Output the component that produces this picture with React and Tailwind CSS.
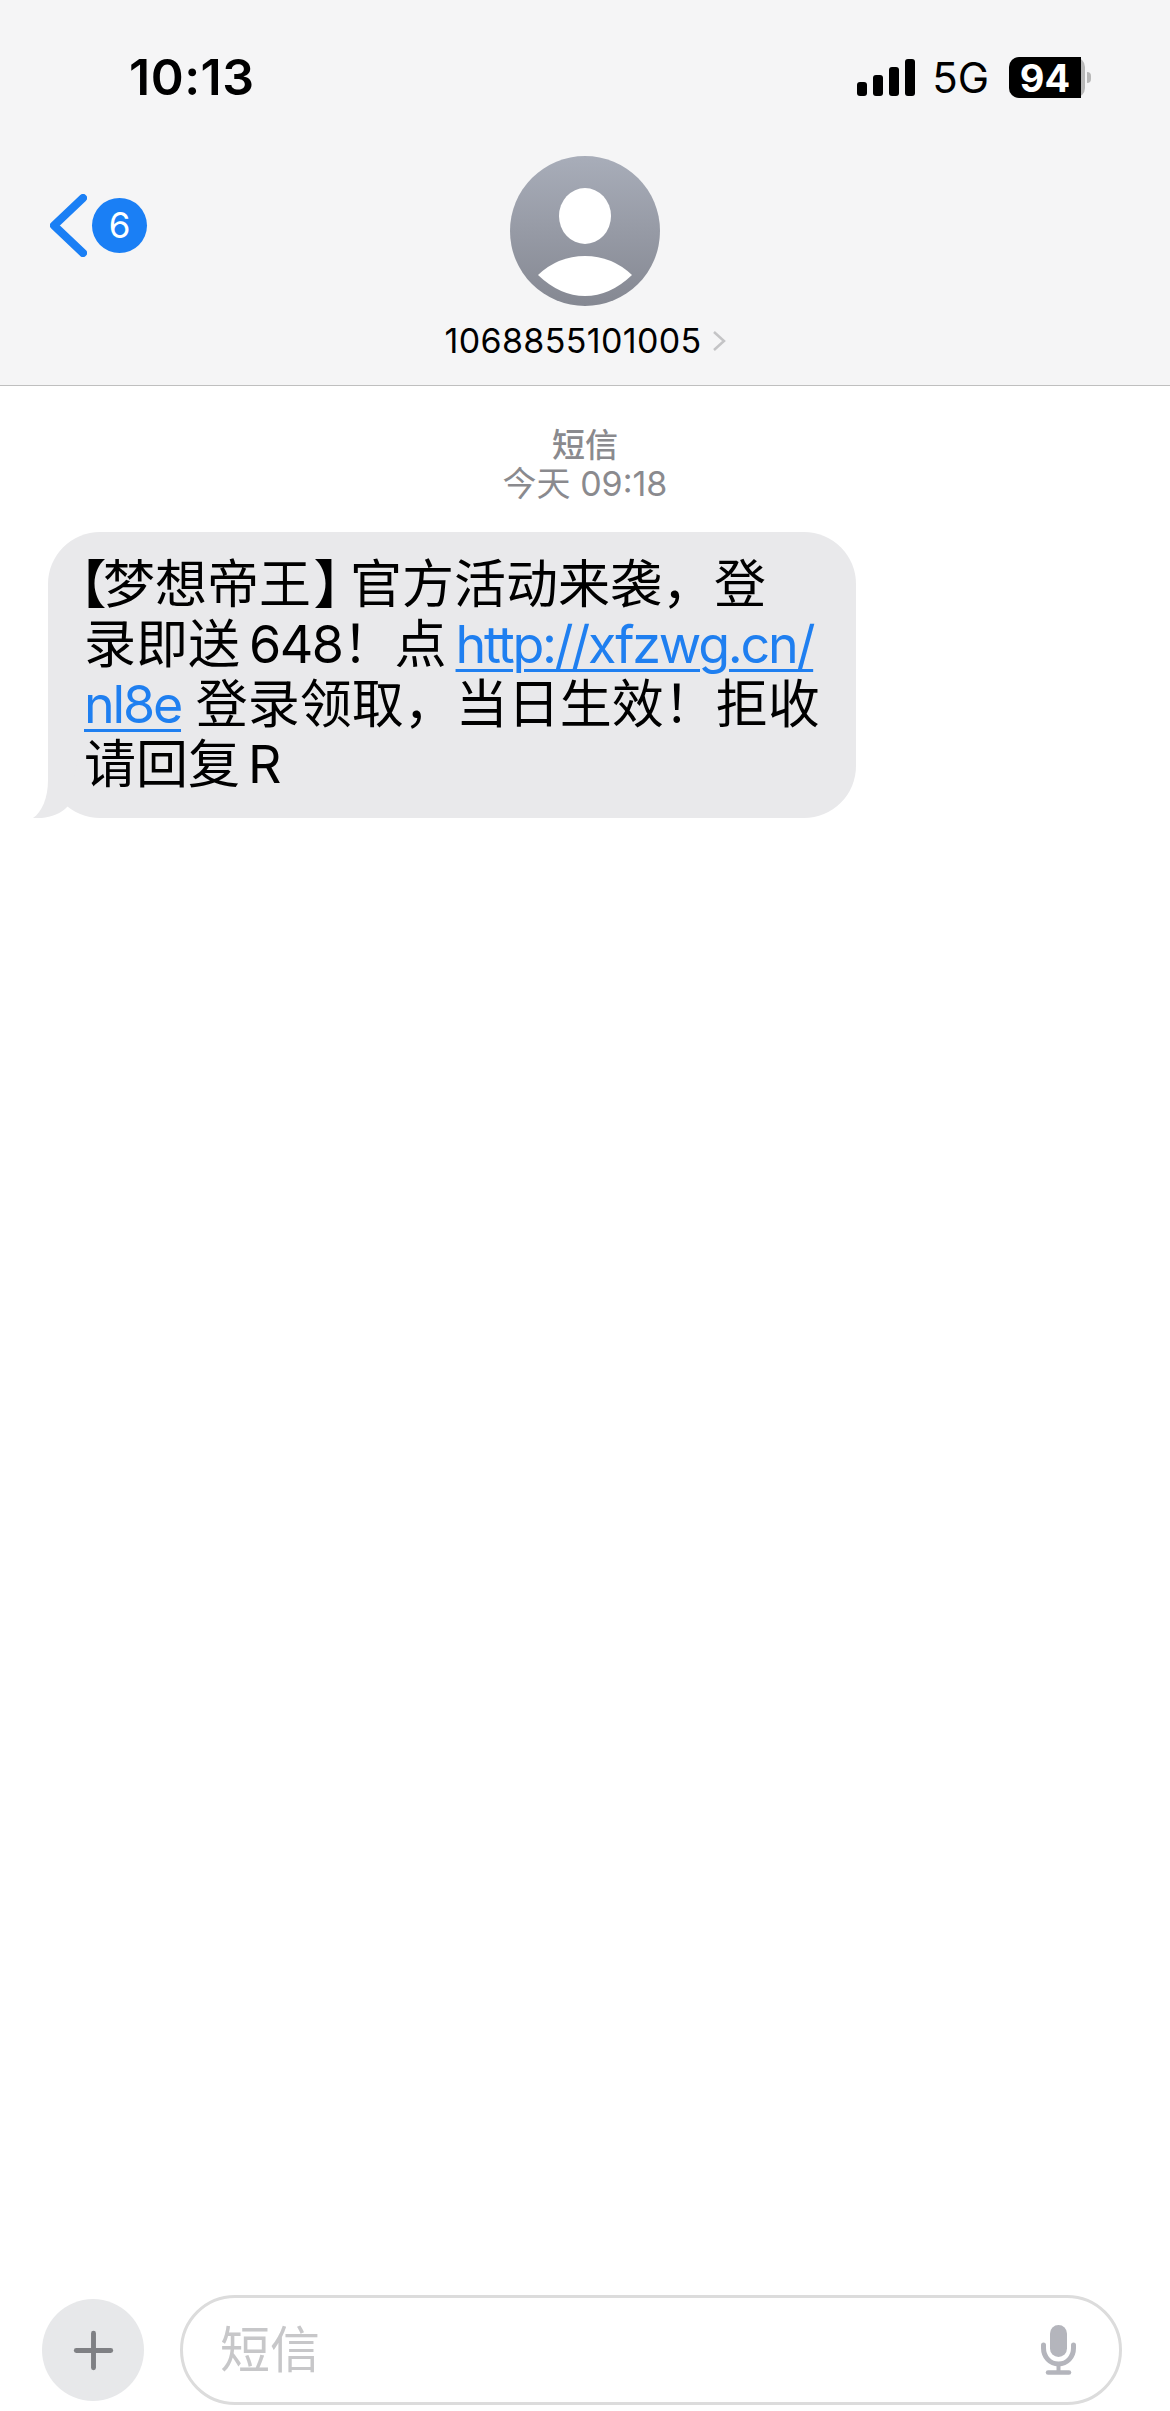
import React from 'react';
import { Plus } from 'lucide-react';

const cjk = { fontFamily: 'Inter, "Noto Sans CJK SC", sans-serif' };

function StatusBar() {
  return (
    <div className="flex h-[156px] justify-between pl-[129px] pr-[79px] pt-[57px] text-black">
      <div className="text-[50px] font-semibold leading-[41px] tracking-[0.5px]">10:13</div>
      <div className="flex h-[41px] items-center">
        <div className="flex h-[41px] items-end gap-[6px] pb-[2px]">
          <div className="h-[14px] w-[10px] rounded-[3px] bg-black" />
          <div className="h-[21px] w-[10px] rounded-[3px] bg-black" />
          <div className="h-[29px] w-[10px] rounded-[3px] bg-black" />
          <div className="h-[37px] w-[10px] rounded-[3px] bg-black" />
        </div>
        <div className="ml-[17px] text-[42px] leading-[41px]">5G</div>
        <div className="ml-[20px] flex h-[41px] items-center">
          <div className="flex h-[41px] w-[76px] rounded-[10px] bg-[#b8b8b8]">
            <div className="flex w-[72px] items-center justify-center rounded-l-[10px] bg-black text-[38px] font-bold leading-none text-white">94</div>
          </div>
          <div className="ml-[2px] h-[11px] w-[4px] rounded-r-full bg-[#b8b8b8]" />
        </div>
      </div>
    </div>
  );
}

function Header() {
  return (
    <header className="h-[386px] border-b border-[#bfbfbf] bg-[#f5f5f6]">
      <StatusBar />
      <div className="grid grid-cols-[1fr_auto_1fr]">
        <div className="flex items-center self-start pl-[50px] pt-[38px]">
          <svg width="37" height="63" viewBox="0 0 37 63" fill="none">
            <path d="M33 4 L4 31.5 L33 59" stroke="#1a7ff5" strokeWidth="8" strokeLinecap="round" strokeLinejoin="round" />
          </svg>
          <div className="ml-[5px] flex h-[55px] w-[55px] items-center justify-center rounded-full bg-[#1a7ff5] text-[35px] leading-none text-white">6</div>
        </div>
        <div className="flex flex-col items-center">
          <div className="flex h-[150px] w-[150px] items-center justify-center rounded-full bg-linear-to-b from-[#a8adb9] to-[#858892]">
            <svg width="150" height="150" viewBox="0 0 150 150">
              <ellipse cx="75" cy="60" rx="26" ry="28" fill="#fff" />
              <path d="M28 119 Q48 100 75 100 Q102 100 122 119 Q100 140 75 140 Q50 140 28 119 Z" fill="#fff" />
            </svg>
          </div>
          <div className="mt-[15px] flex items-center">
            <span className="text-[34px] leading-[40px] tracking-[0.35px] text-black">1068855101005</span>
            <svg className="ml-[10px]" width="14" height="22" viewBox="0 0 14 22" fill="none">
              <path d="M2 2 L12 11 L2 20" stroke="#c4c4c6" strokeWidth="2.5" />
            </svg>
          </div>
        </div>
        <div />
      </div>
    </header>
  );
}

function Bubble() {
  const link = 'tracking-[-2.2px] text-[#1f7ff0] underline decoration-[3px] underline-offset-[6px]';
  return (
    <div className="relative ml-[48px] mt-[29px] h-[286px] w-[808px] rounded-[52px] bg-[#e9e9eb] pl-[36px] pt-[23px] text-[52px] leading-[60px] text-black">
      <svg className="absolute bottom-0 left-[-15px]" width="55" height="60" viewBox="0 0 55 60">
        <path d="M15 0 L15 22 C15 40 9 54 0 60 C12 61 26 58 35 48 L45 0 Z" fill="#e9e9eb" />
      </svg>
      <div className="relative whitespace-nowrap">
        <span className="ml-[-5px] mr-[-2px] [font-feature-settings:'palt'] font-bold">【</span>梦想帝王<span className="ml-[4px] mr-[9px] [font-feature-settings:'palt'] font-bold">】</span>官方活动来袭，登<br />
        录即送<span className="ml-[9px] tracking-[-1.5px]">648</span>！点<a className={`ml-[9px] ${link}`}>http://xfzwg.cn/</a><br />
        <a className={link}>nl8e</a> 登录领取，当日生效！拒收<br />
        请回复<span className="ml-[8px]">R</span>
      </div>
    </div>
  );
}

function InputBar() {
  return (
    <div className="mt-auto flex items-center pb-[6px] pl-[42px] pr-[48px]">
      <div className="flex h-[102px] w-[102px] shrink-0 items-center justify-center rounded-full bg-[#e7e8ea]">
        <Plus size={59} color="#7f8084" strokeWidth={2} />
      </div>
      <div className="ml-[36px] flex h-[110px] flex-1 items-center justify-between rounded-full border-[3px] border-[#dcdcdc] pl-[37px] pr-[43px]">
        <span className="text-[50px] leading-none text-[#c7c7c9]">短信</span>
        <svg width="35" height="50" viewBox="0 0 35 50" fill="none">
          <rect x="9" y="0" width="17" height="32" rx="8.5" fill="#b4b5bc" />
          <path d="M2.5 20 V23 C2.5 32 9 39 17.5 39 C26 39 32.5 32 32.5 23 V20" stroke="#b4b5bc" strokeWidth="5" strokeLinecap="round" />
          <path d="M17.5 39 V47" stroke="#b4b5bc" strokeWidth="4" />
          <path d="M7 47.5 H28" stroke="#b4b5bc" strokeWidth="4.5" strokeLinecap="round" />
        </svg>
      </div>
    </div>
  );
}

export default function App() {
  return (
    <div className="flex h-[2411px] w-[1170px] flex-col overflow-hidden bg-white" style={cjk}>
      <Header />
      <div className="mt-[39px] text-center text-[#8a8a8e]">
        <div className="text-[33px] font-medium leading-[40px]">短信</div>
        <div className="text-[34px] leading-[38px]">今天 09:18</div>
      </div>
      <Bubble />
      <InputBar />
    </div>
  );
}
